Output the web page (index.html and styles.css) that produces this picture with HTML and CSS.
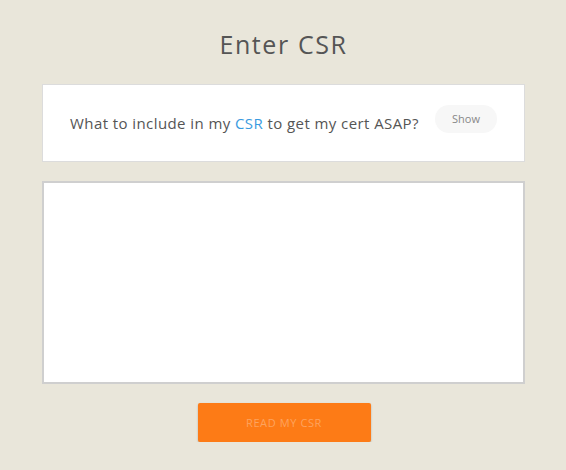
FILE: index.html
```html
<!DOCTYPE html>
<html lang="en">
<head>
    <meta charset="UTF-8">
    <meta name="viewport" content="width=device-width, initial-scale=1.0">
    <title>Enter CSR</title>
    <link rel="stylesheet" href="styles.css">
</head>
<body>
    <div class="page">
        <h1>Enter CSR</h1>

        <div class="hint-box">
            <p>What to include in my <a href="#">CSR</a> to get my cert ASAP?</p>
            <button class="show-btn">Show</button>
        </div>

        <textarea class="csr-input"></textarea>

        <div class="actions">
            <button class="read-btn">READ MY CSR</button>
        </div>
    </div>
</body>
</html>
```

FILE: styles.css
```css
body {
    margin: 0;
    background-color: #e9e6da;
    font-family: "Open Sans", Arial, sans-serif;
    color: #555;
}
.page {
    width: 483px;
    margin: 0 auto;
    padding: 27px 0 0 1px;
}
h1 {
    margin: 0 0 22px;
    font-size: 25px;
    font-weight: 400;
    line-height: 35px;
    letter-spacing: 1.6px;
    text-align: center;
    color: #555;
}
.hint-box {
    display: flex;
    align-items: center;
    height: 76px;
    padding: 0 27px 0 27px;
    background-color: white;
    border: 1px solid #dcdcdc;
}
.hint-box p {
    flex: 1;
    margin: 0;
    font-size: 15px;
    letter-spacing: 0.42px;
    color: #555;
}
.hint-box a {
    color: #3a9be0;
    text-decoration: none;
}
.show-btn {
    width: 62px;
    height: 28px;
    margin-bottom: 8px;
    border: none;
    border-radius: 14px;
    background-color: #f7f7f7;
    font-family: inherit;
    font-size: 11px;
    color: #888;
    padding: 0 0 2px;
}
.csr-input {
    display: block;
    box-sizing: border-box;
    width: 483px;
    height: 203px;
    margin: 19px 0 0;
    border: 2px solid #cfcfcf;
    background-color: white;
    resize: none;
}
.actions {
    display: flex;
    justify-content: center;
    padding: 19px 0 0 1px;
}
.read-btn {
    width: 173px;
    height: 39px;
    border: none;
    border-radius: 2px;
    background-color: #fd7b16;
    color: #fda35e;
    font-family: inherit;
    font-size: 11px;
    letter-spacing: 0.6px;
    box-shadow: 0 1px 2px rgba(0,0,0,0.25);
}
```
